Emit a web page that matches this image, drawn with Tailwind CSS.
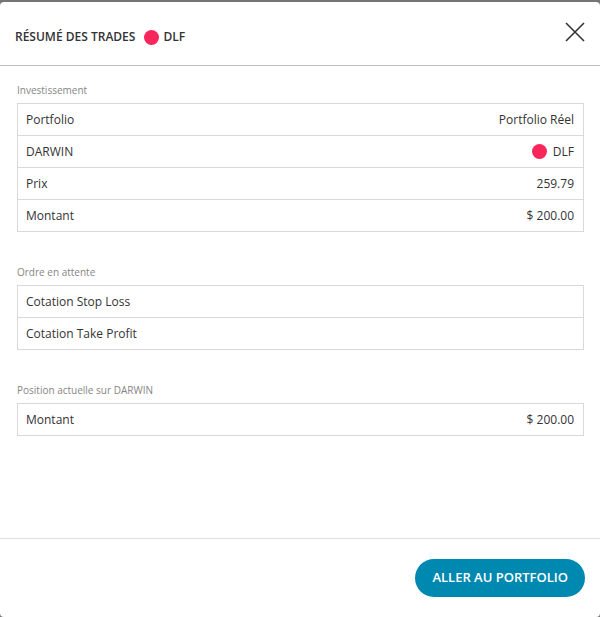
<!DOCTYPE html>
<html lang="fr">
<head>
    <meta charset="UTF-8">
    <meta name="viewport" content="width=device-width, initial-scale=1.0">
    <title>Résumé des trades</title>
    <script src="https://cdn.jsdelivr.net/npm/@tailwindcss/browser@4"></script>
</head>
<body class="bg-[#757575] font-['Open_Sans',sans-serif] text-[#333333]">
    <div class="min-h-screen flex flex-col pt-0.5">
        <main role="dialog" aria-labelledby="title" class="grow flex flex-col bg-white rounded">
            <header class="flex justify-between items-start h-16 pl-[15px] pr-3.5 border-b border-[#bdbdbd]">
                <h1 id="title" class="flex items-center pt-[25px] text-[12px] leading-5 font-semibold">
                    RÉSUMÉ DES TRADES
                    <span class="w-[15px] h-[15px] ml-[9px] mr-1 rounded-full bg-[#f9265b]"></span>
                    DLF
                </h1>
                <button type="button" aria-label="Fermer" class="mt-[19px] cursor-pointer">
                    <svg class="w-[22px] h-[22px]" viewBox="0 0 22 22" fill="none" stroke="#333333" stroke-width="1.6">
                        <path d="M2 2L20 20M20 2L2 20"/>
                    </svg>
                </button>
            </header>

            <div class="pl-[17px] pr-4 pt-[13px] pb-8 flex flex-col gap-[29px]">
                <table class="w-full border-collapse text-[12px] leading-4">
                    <caption class="h-6 pt-[3px] text-left text-[10px] leading-4 text-[#858585]">Investissement</caption>
                    <tbody>
                        <tr class="h-8 border border-[#d9d9d9]">
                            <th scope="row" class="px-2 text-left font-normal">Portfolio</th>
                            <td class="px-[9px] text-right">Portfolio Réel</td>
                        </tr>
                        <tr class="h-8 border border-[#d9d9d9]">
                            <th scope="row" class="px-2 text-left font-normal">DARWIN</th>
                            <td class="px-[9px]">
                                <span class="flex justify-end items-center gap-1.5">
                                    <span class="w-[15px] h-[15px] rounded-full bg-[#f9265b]"></span>
                                    DLF
                                </span>
                            </td>
                        </tr>
                        <tr class="h-8 border border-[#d9d9d9]">
                            <th scope="row" class="px-2 text-left font-normal">Prix</th>
                            <td class="px-[9px] text-right">259.79</td>
                        </tr>
                        <tr class="h-8 border border-[#d9d9d9]">
                            <th scope="row" class="px-2 text-left font-normal">Montant</th>
                            <td class="px-[9px] text-right">$ 200.00</td>
                        </tr>
                    </tbody>
                </table>

                <table class="w-full border-collapse text-[12px] leading-4">
                    <caption class="h-6 pt-[3px] text-left text-[10px] leading-4 text-[#858585]">Ordre en attente</caption>
                    <tbody>
                        <tr class="h-8 border border-[#d9d9d9]">
                            <th scope="row" class="px-2 text-left font-normal">Cotation Stop Loss</th>
                            <td class="px-[9px] text-right"></td>
                        </tr>
                        <tr class="h-8 border border-[#d9d9d9]">
                            <th scope="row" class="px-2 text-left font-normal">Cotation Take Profit</th>
                            <td class="px-[9px] text-right"></td>
                        </tr>
                    </tbody>
                </table>

                <table class="w-full border-collapse text-[12px] leading-4">
                    <caption class="h-6 pt-[3px] text-left text-[10px] leading-4 text-[#858585]">Position actuelle sur DARWIN</caption>
                    <tbody>
                        <tr class="h-8 border border-[#d9d9d9]">
                            <th scope="row" class="px-2 text-left font-normal">Montant</th>
                            <td class="px-[9px] text-right">$ 200.00</td>
                        </tr>
                    </tbody>
                </table>
            </div>

            <footer class="mt-auto flex justify-end px-[15px] py-5 border-t border-[#dedede]">
                <button type="button" class="h-[38px] px-[17px] rounded-full bg-[#0089b0] text-[13px] font-semibold text-white cursor-pointer hover:bg-[#00799c]">
                    ALLER AU PORTFOLIO
                </button>
            </footer>
        </main>
    </div>
</body>
</html>
